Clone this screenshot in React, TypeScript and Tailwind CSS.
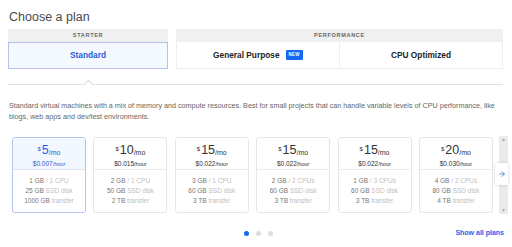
import { ArrowRight } from 'lucide-react'

type Plan = {
  price: string
  hour: string
  mem: string
  cpu: string
  disk: string
  transfer: string
}

const plans: Plan[] = [
  { price: '5', hour: '0.007', mem: '1 GB', cpu: '1 CPU', disk: '25 GB', transfer: '1000 GB' },
  { price: '10', hour: '0.015', mem: '2 GB', cpu: '1 CPU', disk: '50 GB', transfer: '2 TB' },
  { price: '15', hour: '0.022', mem: '3 GB', cpu: '1 CPU', disk: '60 GB', transfer: '3 TB' },
  { price: '15', hour: '0.022', mem: '2 GB', cpu: '2 CPUs', disk: '60 GB', transfer: '3 TB' },
  { price: '15', hour: '0.022', mem: '1 GB', cpu: '3 CPUs', disk: '60 GB', transfer: '3 TB' },
  { price: '20', hour: '0.030', mem: '4 GB', cpu: '2 CPUs', disk: '80 GB', transfer: '4 TB' },
]

function PlanCard({ plan, selected }: { plan: Plan; selected: boolean }) {
  const priceColor = selected ? 'text-[#1d5fd8]' : 'text-[#333]'
  return (
    <div
      className={`w-[74px] h-[76px] shrink-0 rounded-[3px] border overflow-hidden bg-white ${
        selected ? 'border-[#b9c2ee]' : 'border-[#e6e6e6]'
      }`}
    >
      <div
        className={`h-[32px] pt-[6px] border-b ${
          selected ? 'border-[#dfe5f7] bg-[#f3f7ff]' : 'border-[#ececec]'
        } ${priceColor}`}
      >
        <div className="flex items-start justify-center leading-[12px]">
          <span className="text-[6px] leading-[8px] mt-[1px] mr-[1px]">$</span>
          <span className="text-[12.5px]">{plan.price}</span>
          <span className="text-[7px] mt-[3px]">/mo</span>
        </div>
        <div className="text-center leading-[9px] text-[6.5px]">
          ${plan.hour}
          <span className="text-[5.5px]">/hour</span>
        </div>
      </div>
      <div className="pt-[6px] text-center text-[6.5px] leading-[10px] text-[#777]">
        <div>
          {plan.mem} <span className="text-[#c0c0c0]">/ {plan.cpu}</span>
        </div>
        <div>
          {plan.disk} <span className="text-[#c0c0c0]">SSD disk</span>
        </div>
        <div>
          {plan.transfer} <span className="text-[#c0c0c0]">transfer</span>
        </div>
      </div>
    </div>
  )
}

export default function App() {
  return (
    <div className="w-[512px] h-[247px] bg-white overflow-hidden font-['Liberation_Sans',Arial,sans-serif]">
      <h1 className="pl-[9px] pt-[8px] text-[12.5px] leading-[18px] text-[#4a4a4a]">Choose a plan</h1>

      {/* tabs */}
      <div className="ml-[8px] mt-[3px] flex gap-[8px] w-[495px]">
        <div className="w-[160px]">
          <div className="h-[13px] bg-[#f0f0f0] flex items-center justify-center text-[5.5px] tracking-[0.7px] font-bold text-[#666]">
            STARTER
          </div>
          <div className="h-[27px] border border-[#b9c2ee] bg-[#f4f8ff] flex items-center justify-center text-[8.3px] font-bold text-[#1d5fd8]">
            Standard
          </div>
        </div>
        <div className="flex-1">
          <div className="h-[13px] bg-[#f0f0f0] flex items-center justify-center text-[5.5px] tracking-[0.7px] font-bold text-[#666]">
            PERFORMANCE
          </div>
          <div className="h-[27px] flex border border-t-0 border-[#eeeeee] text-[8.3px] font-bold text-[#222]">
            <div className="flex-1 flex items-center justify-center gap-[6px] border-r border-[#eeeeee]">
              General Purpose
              <span className="bg-[#1467f0] text-white text-[4.5px] leading-[10px] px-[3px] rounded-[1px] tracking-[0.3px]">
                NEW
              </span>
            </div>
            <div className="flex-1 flex items-center justify-center">CPU Optimized</div>
          </div>
        </div>
      </div>

      {/* divider with caret */}
      <div className="relative ml-[8px] mt-[15px] w-[495px] h-px bg-[#e2e2e2]">
        <div className="absolute left-[77px] top-[-3px] w-[7px] h-[7px] rotate-45 bg-white border-l border-t border-[#dcdcdc]" />
      </div>

      <p className="ml-[9px] mt-[15px] text-[7.2px] leading-[11px] text-[#666]">
        <span className="block whitespace-nowrap">
          Standard virtual machines with a mix of memory and compute resources. Best for small projects that can handle variable levels of CPU performance, like
        </span>
        <span className="block whitespace-nowrap">blogs, web apps and dev/test environments.</span>
      </p>

      {/* cards */}
      <div className="relative mt-[14px] ml-[12px] flex items-start">
        <div className="mt-[1px] flex gap-[7.4px]">
          {plans.map((p, i) => (
            <PlanCard key={i} plan={p} selected={i === 0} />
          ))}
        </div>
        <div className="ml-[6px] w-[9px] h-[78px] bg-[#ebebeb] flex flex-col items-center justify-between text-[5px] leading-[7px] text-[#aaa]">
          <span>▲</span>
          <span>▼</span>
        </div>
        <div className="absolute left-[483px] top-[27px] w-[13px] h-[22px] bg-white shadow-[0_0_3px_rgba(0,0,0,0.18)] flex items-center justify-center text-[#1d5fd8]">
          <ArrowRight size={8} strokeWidth={2} />
        </div>
      </div>

      {/* footer */}
      <div className="mt-[14px] pl-[12px] pr-[8px] grid grid-cols-[1fr_auto_1fr] items-center h-[10px]">
        <div />
        <div className="flex gap-[7px]">
          <span className="w-[5px] h-[5px] rounded-full bg-[#1467f0]" />
          <span className="w-[5px] h-[5px] rounded-full bg-[#dcdcdc]" />
          <span className="w-[5px] h-[5px] rounded-full bg-[#dcdcdc]" />
        </div>
        <div className="text-right text-[7px] font-bold text-[#1467f0]">Show all plans</div>
      </div>
    </div>
  )
}
